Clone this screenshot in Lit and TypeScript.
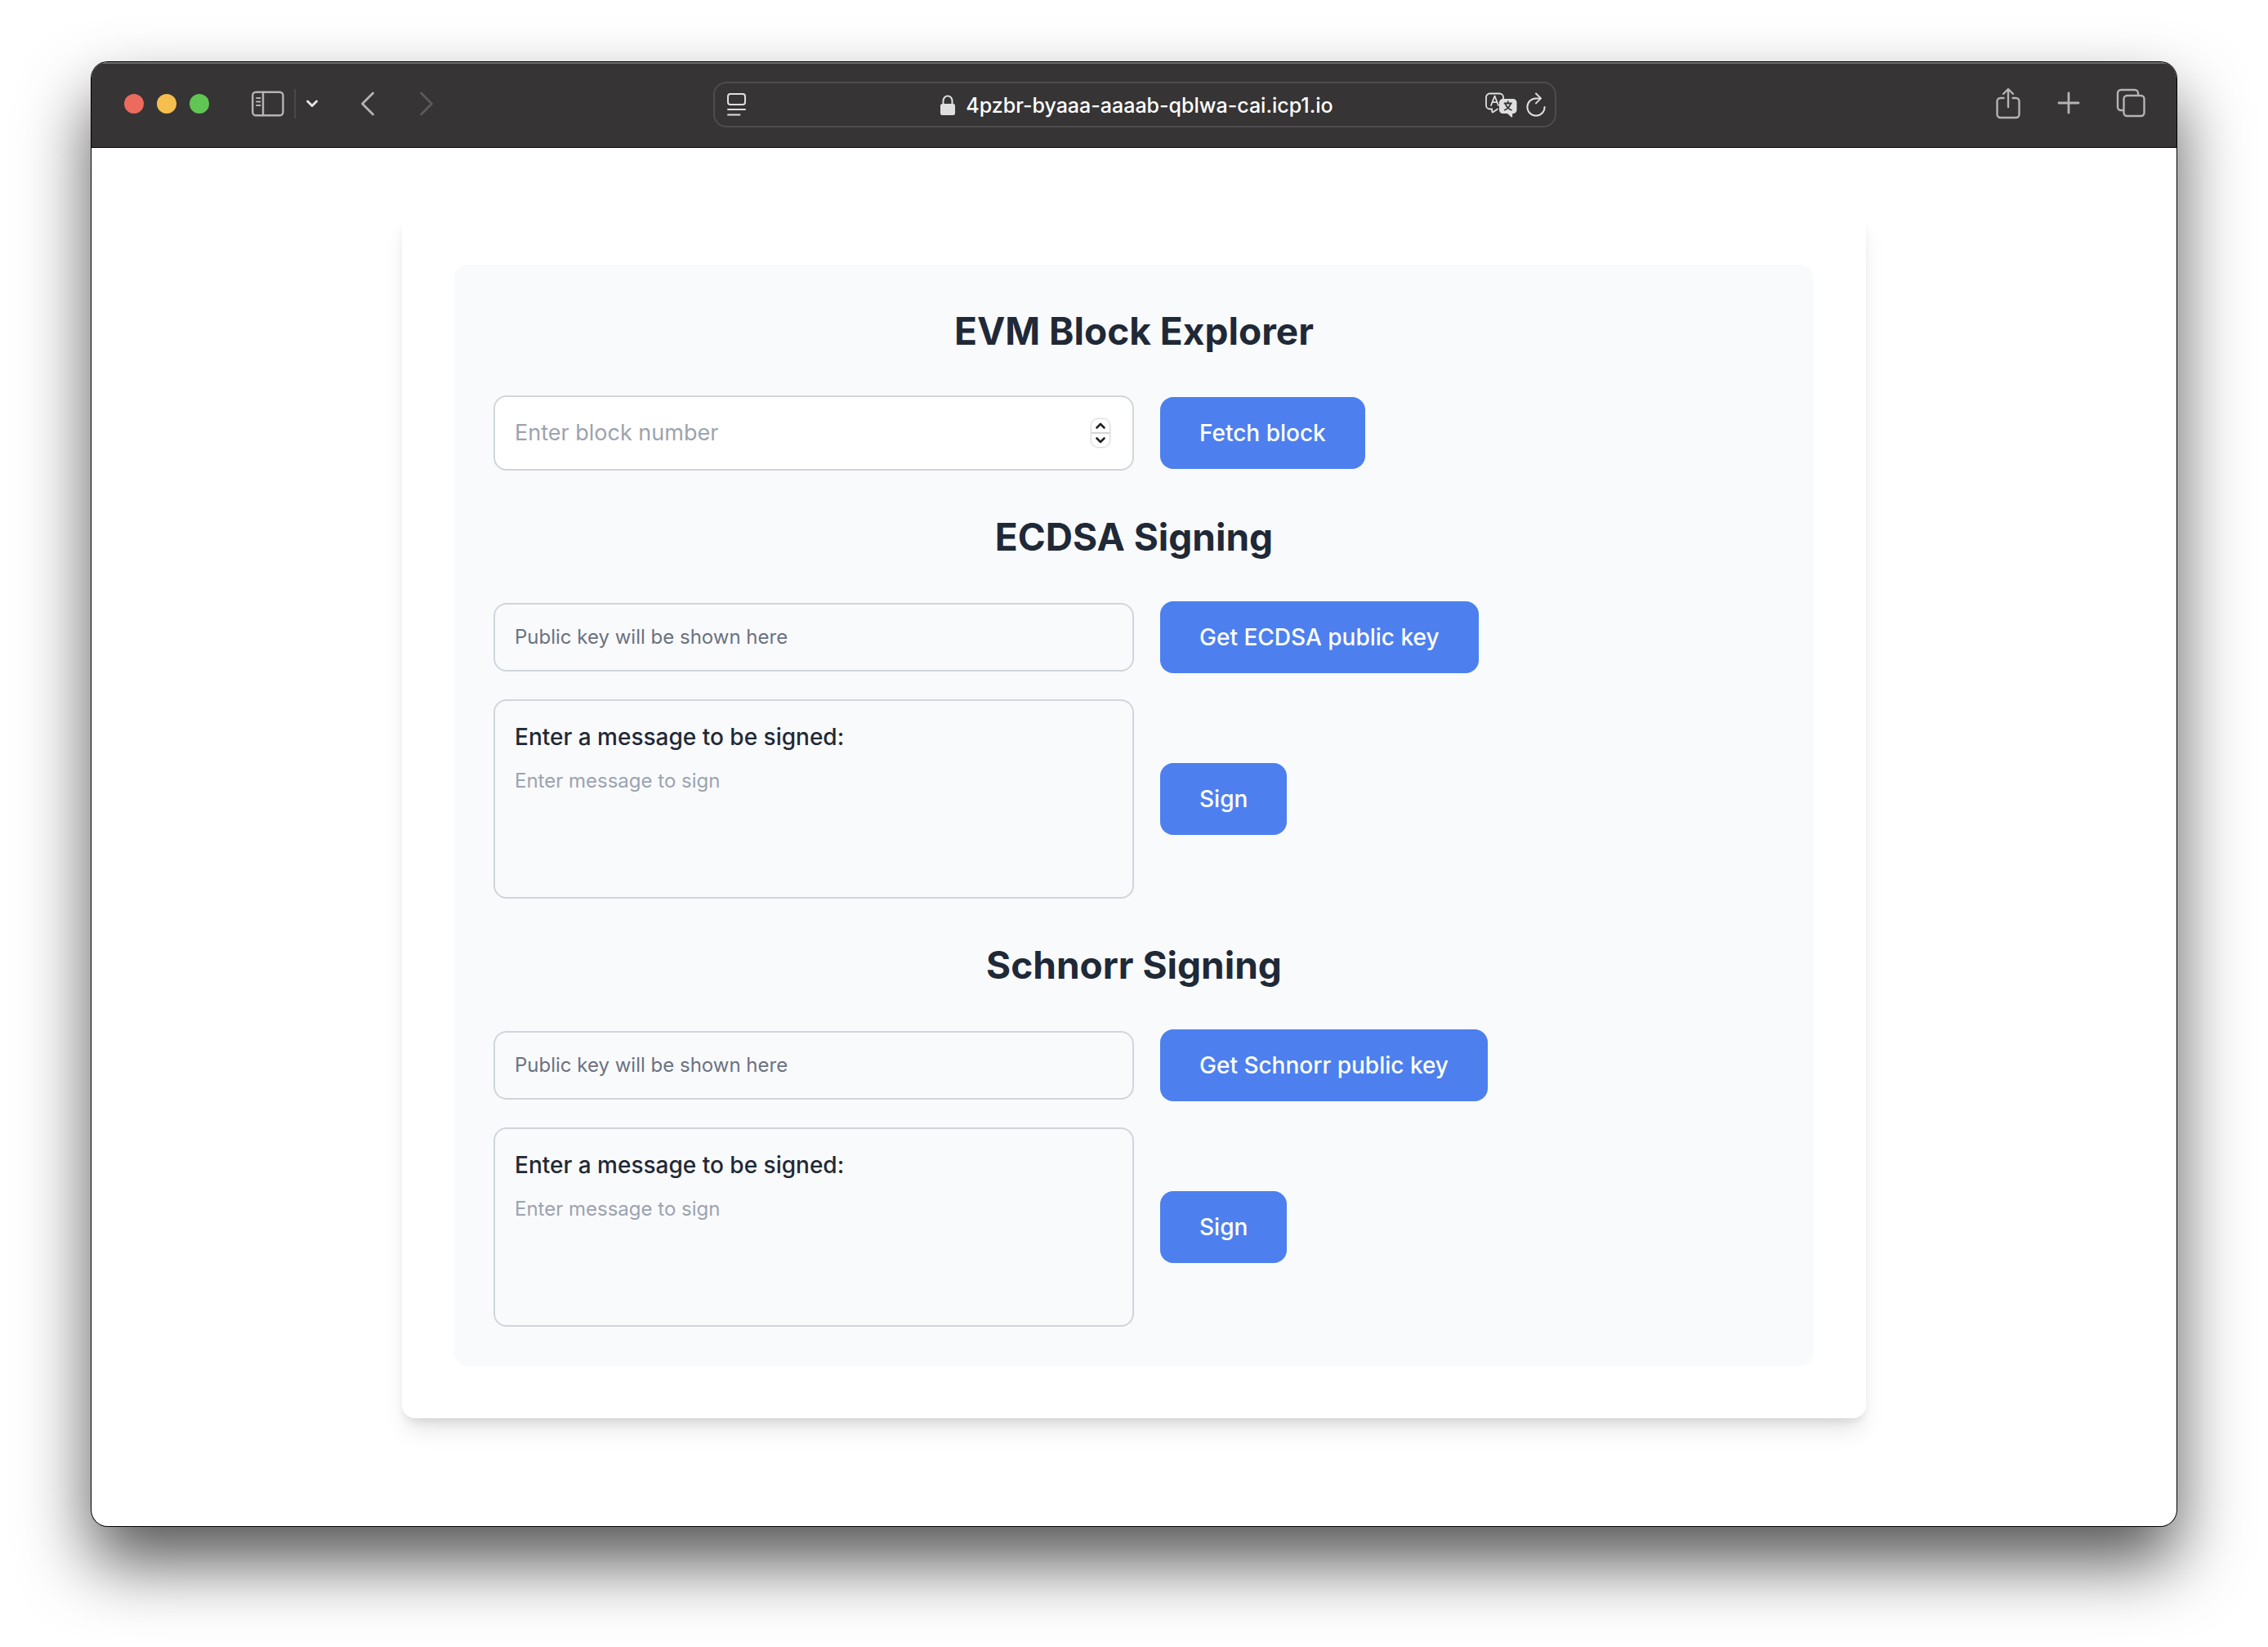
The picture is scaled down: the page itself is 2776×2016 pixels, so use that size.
import { LitElement, html, css } from "lit";
import { customElement, property, state } from "lit/decorators.js";

const controls = css`
  * {
    box-sizing: border-box;
  }
  button,
  input,
  textarea {
    margin: 0;
    padding: 0;
    border: 0;
    background: none;
    font: inherit;
    color: inherit;
    outline: none;
  }
  button {
    cursor: pointer;
  }
  svg {
    display: block;
    flex: none;
  }
`;

const form = css`
  .title {
    margin: 0 0 46px;
    font-size: 46px;
    line-height: 66px;
    font-weight: 700;
    text-align: center;
    color: #1f2937;
  }
  .row {
    display: grid;
    grid-template-columns: 50% minmax(0, 1fr);
    gap: 32px;
    align-items: center;
  }
  .row + .row {
    margin-top: 32px;
  }
  .field {
    border: 2px solid #d1d5db;
    border-radius: 16px;
    padding: 24px;
  }
  .action {
    justify-self: start;
    padding: 20px 48px;
    border-radius: 16px;
    background: #4d80ee;
    color: #ffffff;
    font-size: 28px;
    line-height: 48px;
    font-weight: 500;
    white-space: nowrap;
  }
`;

@customElement("browser-toolbar")
class BrowserToolbar extends LitElement {
  @property() address = "";

  static styles = [
    controls,
    css`
      :host {
        display: block;
      }
      .bar {
        display: grid;
        grid-template-columns: minmax(0, 1fr) minmax(0, 1032px) minmax(0, 1fr);
        align-items: center;
        height: 105px;
        padding: 0 38px 0 40px;
        background: #363435;
        color: #b5b3b4;
        border-bottom: 1px solid #000000;
        box-shadow: inset 0 2px 0 #6e6d6d;
      }
      .group {
        display: flex;
        align-items: center;
        padding-bottom: 2px;
      }
      .end {
        justify-content: flex-end;
        gap: 42px;
        padding-bottom: 4px;
      }
      .lights {
        display: flex;
        gap: 16px;
        margin-right: 52px;
      }
      .light {
        width: 24px;
        height: 24px;
        border-radius: 50%;
      }
      .close {
        background: #ed6a5e;
      }
      .minimise {
        background: #f4bf4f;
      }
      .zoom {
        background: #61c554;
      }
      .divider {
        width: 2px;
        height: 36px;
        margin: 0 12px;
        background: #4a4849;
      }
      .menu {
        color: #e4e3e3;
        margin-right: 50px;
      }
      .back {
        margin-right: 52px;
      }
      .forward {
        color: #5c5a5b;
      }
      .address {
        display: grid;
        grid-template-columns: minmax(0, 1fr) auto minmax(0, 1fr);
        align-items: center;
        height: 56px;
        padding: 0 10px 0 14px;
        border: 2px solid #4e4c4d;
        border-radius: 16px;
        color: #e0dfdf;
      }
      .site {
        display: flex;
        align-items: center;
        gap: 12px;
        padding-top: 2px;
        color: #ffffff;
        font-size: 25px;
        line-height: 32px;
        font-weight: 500;
        white-space: nowrap;
      }
      .tools {
        display: flex;
        justify-content: flex-end;
        align-items: center;
        gap: 10px;
      }
      .lock {
        color: #e0dfdf;
      }
    `,
  ];

  render() {
    return html`
      <header class="bar">
        <div class="group">
          <div class="lights">
            <button class="light close" aria-label="Close"></button>
            <button class="light minimise" aria-label="Minimise"></button>
            <button class="light zoom" aria-label="Zoom"></button>
          </div>
          <button aria-label="Sidebar">
            <svg width="40" height="32" viewBox="0 0 40 32" fill="none" stroke="currentColor" stroke-width="2.4" stroke-linecap="round">
              <rect x="1.2" y="1.7" width="37.2" height="28.6" rx="4" />
              <path d="M14 2v28" />
              <path d="M6 9h4.5M6 13.5h4.5M6 18h4.5" stroke-width="1.8" />
            </svg>
          </button>
          <span class="divider"></span>
          <button class="menu" aria-label="Tab groups">
            <svg width="16" height="12" viewBox="0 0 16 12" fill="none" stroke="currentColor" stroke-width="3" stroke-linecap="round" stroke-linejoin="round">
              <path d="M2.5 3l5.5 5.5L13.5 3" />
            </svg>
          </button>
          <button class="back" aria-label="Back">
            <svg width="20" height="32" viewBox="0 0 20 32" fill="none" stroke="currentColor" stroke-width="2.8" stroke-linecap="round" stroke-linejoin="round">
              <path d="M16.5 3L3.5 16l13 13" />
            </svg>
          </button>
          <button class="forward" aria-label="Forward">
            <svg width="20" height="32" viewBox="0 0 20 32" fill="none" stroke="currentColor" stroke-width="2.8" stroke-linecap="round" stroke-linejoin="round">
              <path d="M3.5 3l13 13-13 13" />
            </svg>
          </button>
        </div>

        <div class="address">
          <button aria-label="Page menu">
            <svg width="26" height="30" viewBox="0 0 26 30" fill="none" stroke="currentColor" stroke-width="2" stroke-linecap="round">
              <rect x="2" y="2" width="21" height="13" rx="3" />
              <path d="M2 21h21M2 27.5h14.5" />
            </svg>
          </button>
          <div class="site">
            <svg class="lock" width="20" height="28" viewBox="0 0 20 28">
              <path d="M4.5 13V8.5a5.500 6 0 0 1 11 0V13" fill="none" stroke="currentColor" stroke-width="2" />
              <rect x="1" y="12" width="18" height="14" rx="2.5" fill="currentColor" />
            </svg>
            <span>${this.address}</span>
          </div>
          <div class="tools">
            <button aria-label="Translate">
              <svg width="40" height="32" viewBox="0 0 40 32">
                <path d="M16 21.5l-5.500 3.700c-.8.500-1.300.1-1.300-.7v-3H6.500a4.500 4.500 0 0 1-4.500-4.500V7a4.500 4.500 0 0 1 4.500-4.500h12A4.500 4.500 0 0 1 23 7v1.500" fill="none" stroke="currentColor" stroke-width="1.8" stroke-linejoin="round" stroke-linecap="round" />
                <path d="M8 17l4.500-11.500L17 17M9.500 13.200h6" fill="none" stroke="currentColor" stroke-width="1.8" stroke-linecap="round" stroke-linejoin="round" />
                <path d="M22.500 9h12.500a4.500 4.500 0 0 1 4.500 4.500v9a4.500 4.500 0 0 1-4.500 4.500h-.8v3.600c0 .9-.8 1.200-1.500.6L28 27h-5.500a4.500 4.500 0 0 1-4.500-4.500v-9A4.500 4.500 0 0 1 22.500 9z" fill="currentColor" />
                <path d="M28.700 11.500v3M23.800 14.500h9.800M32 14.800c-1.200 4-4 6.800-8 8.200M25.500 14.800c1.200 4 4 6.800 8 8.200" fill="none" stroke="#363435" stroke-width="1.8" />
              </svg>
            </button>
            <button aria-label="Reload">
              <svg width="26" height="32" viewBox="0 0 26 32" fill="none" stroke="currentColor" stroke-width="2" stroke-linecap="round" stroke-linejoin="round">
                <path d="M18.500 8.400H13a10.600 10.600 0 1 0 10.600 10.600" />
                <path d="M13 2.500l6 5.900-6 6" />
              </svg>
            </button>
          </div>
        </div>

        <div class="group end">
          <button aria-label="Share">
            <svg width="32" height="40" viewBox="0 0 32 40" fill="none" stroke="currentColor" stroke-width="2.4" stroke-linecap="round" stroke-linejoin="round">
              <path d="M10.500 14H6.500A4 4 0 0 0 2.500 18v16a4 4 0 0 0 4 4h19a4 4 0 0 0 4-4V18a4 4 0 0 0-4-4h-4" />
              <path d="M16 25V3.500M10 9l6-6 6 6" />
            </svg>
          </button>
          <button aria-label="New tab">
            <svg width="32" height="32" viewBox="0 0 32 32" fill="none" stroke="currentColor" stroke-width="2.8" stroke-linecap="round">
              <path d="M16 4v24M4 16h24" />
            </svg>
          </button>
          <button aria-label="Tab overview">
            <svg width="36" height="36" viewBox="0 0 36 36" fill="none" stroke="currentColor" stroke-width="2.4" stroke-linejoin="round">
              <rect x="9.5" y="9" width="25" height="25" rx="4" />
              <path d="M9 27H6a4 4 0 0 1-4-4V6a4 4 0 0 1 4-4h17a4 4 0 0 1 4 4v3" />
            </svg>
          </button>
        </div>
      </header>
    `;
  }
}

@customElement("block-explorer")
class BlockExplorer extends LitElement {
  @state() private block = "";

  static styles = [
    controls,
    form,
    css`
      :host {
        display: block;
      }
      .number {
        display: flex;
        align-items: center;
        padding: 20px 28px 20px 24px;
        background: #ffffff;
      }
      .number input {
        flex: 1;
        min-width: 0;
        font-size: 27px;
        line-height: 48px;
        height: 48px;
        appearance: textfield;
      }
      .number input::-webkit-inner-spin-button {
        appearance: none;
      }
      .number input::placeholder {
        color: #9ca3af;
        opacity: 1;
      }
      .stepper {
        display: flex;
        flex-direction: column;
        width: 22px;
        border-radius: 8px;
        background: #ffffff;
        color: #222222;
        box-shadow: 0 0 2px 1px #d0d0d0;
      }
      .step {
        display: flex;
        justify-content: center;
        align-items: center;
        height: 16px;
      }
      .up {
        height: 18px;
        border-bottom: 2px solid #d4d4d4;
      }
    `,
  ];

  private step(by: number) {
    this.block = String(Math.max(0, Number(this.block) + by));
  }

  render() {
    return html`
      <h2 class="title">EVM Block Explorer</h2>
      <div class="row">
        <div class="field number">
          <input
            type="number"
            aria-label="Block number"
            placeholder="Enter block number"
            .value=${this.block}
            @input=${(e: Event) => (this.block = (e.target as HTMLInputElement).value)}
          />
          <div class="stepper">
            <button class="step up" aria-label="Increase" @click=${() => this.step(1)}>
              <svg width="14" height="10" viewBox="0 0 14 10" fill="none" stroke="currentColor" stroke-width="2.6" stroke-linecap="round" stroke-linejoin="round">
                <path d="M2.500 7.500L7 3l4.500 4.500" />
              </svg>
            </button>
            <button class="step" aria-label="Decrease" @click=${() => this.step(-1)}>
              <svg width="14" height="10" viewBox="0 0 14 10" fill="none" stroke="currentColor" stroke-width="2.6" stroke-linecap="round" stroke-linejoin="round">
                <path d="M2.500 2.500L7 7l4.500-4.500" />
              </svg>
            </button>
          </div>
        </div>
        <button class="action">Fetch block</button>
      </div>
    `;
  }
}

@customElement("signing-form")
class SigningForm extends LitElement {
  @property() scheme = "";

  static styles = [
    controls,
    form,
    css`
      :host {
        display: block;
      }
      .key {
        padding: 20px 24px;
        color: #6b7280;
        font-size: 24px;
        line-height: 40px;
      }
      .message {
        display: flex;
        flex-direction: column;
        gap: 18px;
      }
      .label {
        color: #1f2937;
        font-size: 28px;
        line-height: 40px;
        font-weight: 500;
      }
      .text {
        display: block;
        width: 100%;
        height: 134px;
        resize: none;
        color: #1f2937;
        font-size: 24px;
        line-height: 32px;
      }
      .text::placeholder {
        color: #9ca3af;
        opacity: 1;
      }
    `,
  ];

  render() {
    return html`
      <h2 class="title">${this.scheme} Signing</h2>
      <div class="row">
        <div class="field key">Public key will be shown here</div>
        <button class="action">Get ${this.scheme} public key</button>
      </div>
      <div class="row">
        <div class="field message">
          <label class="label" for="message">Enter a message to be signed:</label>
          <textarea class="text" id="message" placeholder="Enter message to sign"></textarea>
        </div>
        <button class="action">Sign</button>
      </div>
    `;
  }
}

@customElement("app-root")
class AppRoot extends LitElement {
  static styles = css`
    * {
      box-sizing: border-box;
    }
    :host {
      display: flex;
      flex-direction: column;
      min-height: 100vh;
      box-sizing: border-box;
      padding: 76px 112px 148px;
      background: #ffffff;
      overflow: hidden;
      font-family: Inter, "Liberation Sans", sans-serif;
    }
    .window {
      flex: 1;
      display: flex;
      flex-direction: column;
      border-radius: 20px;
      background: #ffffff;
      box-shadow:
        0 0 0 1px #000000,
        0 44px 84px rgba(0, 0, 0, 0.67);
    }
    .chrome {
      overflow: hidden;
      border-radius: 20px 20px 0 0;
    }
    .page {
      flex: 1;
      padding: 79px 64px;
    }
    .card {
      max-width: 1792px;
      margin: 0 auto;
      padding: 64px;
      border-radius: 16px;
      background: #ffffff;
      box-shadow:
        0 20px 30px -6px rgba(0, 0, 0, 0.1),
        0 8px 12px -4px rgba(0, 0, 0, 0.1);
    }
    .panel {
      display: flex;
      flex-direction: column;
      gap: 48px;
      padding: 48px;
      border-radius: 16px;
      background: #f9fafc;
    }
  `;

  render() {
    return html`
      <div class="window">
        <browser-toolbar class="chrome" address="4pzbr-byaaa-aaaab-qblwa-cai.icp1.io"></browser-toolbar>
        <main class="page">
          <div class="card">
            <div class="panel">
              <block-explorer></block-explorer>
              <signing-form scheme="ECDSA"></signing-form>
              <signing-form scheme="Schnorr"></signing-form>
            </div>
          </div>
        </main>
      </div>
    `;
  }
}
